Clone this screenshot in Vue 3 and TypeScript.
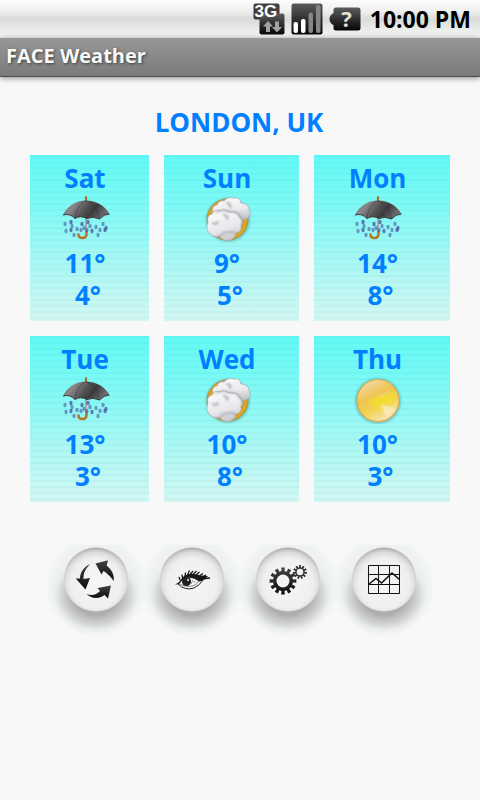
<script setup lang="ts">
interface Forecast {
  day: string
  icon: 'rain' | 'cloud' | 'sun'
  condition: string
  high: number
  low: number
}

interface Action {
  icon: string
  label: string
}

const city = 'LONDON, UK'

const forecasts: Forecast[] = [
  { day: 'Sat', icon: 'rain', condition: 'Rain', high: 11, low: 4 },
  { day: 'Sun', icon: 'cloud', condition: 'Cloudy', high: 9, low: 5 },
  { day: 'Mon', icon: 'rain', condition: 'Rain', high: 14, low: 8 },
  { day: 'Tue', icon: 'rain', condition: 'Rain', high: 13, low: 3 },
  { day: 'Wed', icon: 'cloud', condition: 'Cloudy', high: 10, low: 8 },
  { day: 'Thu', icon: 'sun', condition: 'Sunny', high: 10, low: 3 },
]

const actions: Action[] = [
  { icon: 'refresh', label: 'Refresh' },
  { icon: 'eye', label: 'View' },
  { icon: 'gears', label: 'Settings' },
  { icon: 'chart', label: 'Chart' },
]

const drops: number[][] = [
  [3, 29], [9, 27], [10, 31], [4, 36], [9, 35], [15, 34], [12, 40], [20, 29], [22, 33],
  [19, 35], [26, 27], [28, 31], [25, 35], [30, 36], [34, 32], [41, 29], [44, 33],
  [38, 35], [36, 40], [43, 35],
]

// Closed outline of a gear with square teeth around (cx, cy).
function gear(cx: number, cy: number, inner: number, outer: number, teeth: number): string {
  const step = (Math.PI * 2) / teeth
  const points: string[] = []
  for (let i = 0; i < teeth; i++) {
    const a = i * step - Math.PI / 2
    const corners: [number, number][] = [
      [inner, -0.28], [outer, -0.25], [outer, 0.25], [inner, 0.28],
    ]
    for (const [r, k] of corners) {
      points.push(`${(cx + r * Math.cos(a + k * step)).toFixed(2)} ${(cy + r * Math.sin(a + k * step)).toFixed(2)}`)
    }
  }
  return `M${points.join('L')}Z`
}

const bigGear = gear(43, 36, 10, 13.5, 12)
const smallGear = gear(60, 27, 4.8, 7, 11)
</script>

<template>
  <div class="screen">
    <svg class="defs" width="0" height="0" aria-hidden="true">
      <defs>
        <linearGradient id="plate" x1="0" y1="0" x2="0" y2="1">
          <stop offset="0" stop-color="#5c5c5c" />
          <stop offset="0.5" stop-color="#303030" />
          <stop offset="1" stop-color="#050505" />
        </linearGradient>
        <linearGradient id="umbrella" x1="0" y1="0" x2="1" y2="0.3">
          <stop offset="0" stop-color="#5a585a" />
          <stop offset="0.28" stop-color="#8b898b" />
          <stop offset="0.55" stop-color="#555355" />
          <stop offset="0.75" stop-color="#3c3a3c" />
          <stop offset="1" stop-color="#6a686a" />
        </linearGradient>
        <linearGradient id="puff" x1="0.3" y1="0" x2="0.6" y2="1">
          <stop offset="0" stop-color="#fbfbfc" />
          <stop offset="0.6" stop-color="#e9e9ec" />
          <stop offset="1" stop-color="#c2c4c9" />
        </linearGradient>
        <linearGradient id="sunbody" x1="0.2" y1="0" x2="0.7" y2="1">
          <stop offset="0" stop-color="#f4dcae" />
          <stop offset="0.4" stop-color="#efc350" />
          <stop offset="0.65" stop-color="#f2d450" />
          <stop offset="1" stop-color="#f6e3c0" />
        </linearGradient>
        <radialGradient id="halo">
          <stop offset="0" stop-color="#e9ebe9" />
          <stop offset="0.8" stop-color="#eef1ee" />
          <stop offset="1" stop-color="#f3f7f3" />
        </radialGradient>
        <radialGradient id="drop">
          <stop offset="0" stop-color="#9c9e9c" />
          <stop offset="0.5" stop-color="#aeb0ae" />
          <stop offset="0.75" stop-color="#cfd1cf" stop-opacity="0.85" />
          <stop offset="1" stop-color="#f0f2f0" stop-opacity="0" />
        </radialGradient>
        <radialGradient id="knob" cx="0.5" cy="0.56" r="0.56">
          <stop offset="0" stop-color="#f6f7f6" />
          <stop offset="0.7" stop-color="#eeefee" />
          <stop offset="0.86" stop-color="#dcdddc" />
          <stop offset="1" stop-color="#acaeac" />
        </radialGradient>
        <linearGradient id="ink" x1="0" y1="0" x2="0" y2="1">
          <stop offset="0" stop-color="#424242" />
          <stop offset="1" stop-color="#0c0c0c" />
        </linearGradient>
        <filter id="soft" x="-40%" y="-40%" width="180%" height="180%">
          <feGaussianBlur stdDeviation="1.2" />
        </filter>

        <symbol id="wx-rain" viewBox="0 0 48 48">
          <path d="M24 2V8" stroke="#a8752f" stroke-width="2.2" stroke-linecap="round" />
          <path d="M24 22V37" stroke="#a9a7a0" stroke-width="2" />
          <path d="M24.500 36V38.500Q24.500 43 20.500 43Q16.500 43 16.500 39.500" fill="none" stroke="#b6762a" stroke-width="2.600" stroke-linecap="round" />
          <g fill="#5060a4">
            <ellipse v-for="([x, y], i) in drops" :key="i" :cx="x" :cy="y" rx="1.600" ry="2.200" :opacity="i % 3 === 1 ? 0.85 : 0.65" />
          </g>
          <path d="M1 20Q8 6 24 5.500Q40 6 47.500 19Q42 19 37.500 24Q31 21 25 23.500Q18 20 13 23.500Q8 18 1 20Z" fill="url(#umbrella)" />
          <path d="M1 20Q8 18 13 23.500Q18 20 25 23.500Q31 21 37.500 24Q42 19 47.500 19" fill="none" stroke="#3b393b" stroke-width="1" />
          <path d="M24 5.500Q14 11 13 23M24 5.500Q35 10 37.500 24" fill="none" stroke="#2b292b" stroke-width="0.900" opacity="0.450" />
        </symbol>

        <symbol id="wx-cloud" viewBox="0 0 48 48">
          <circle cx="24" cy="25" r="22" fill="#4d8f8b" opacity="0.450" filter="url(#soft)" />
          <circle cx="23.500" cy="24.500" r="20.500" fill="#dba520" stroke="#a98534" stroke-width="0.800" />
          <g stroke="#a6a9ae" stroke-width="0.700" fill="url(#puff)">
            <path d="M9 17Q7 11 13 10Q15 5 20 6Q24 1 30 3Q36 2 37 8Q44 8 45 14Q48 20 44 23Q40 26 34 24Q27 26 22 20Q14 22 9 17Z" />
            <path d="M4 27Q2 21 8 19Q10 14 16 16Q20 13 25 17Q33 16 35 21Q41 26 37 31Q38 37 32 38Q31 44 24 46Q17 45 16 41Q10 43 6 39Q1 34 4 27Z" />
          </g>
          <path d="M11 18Q17 14 25 16.500Q34 16 36 22Q40 26 37 31" fill="none" stroke="#84878e" stroke-width="1.500" opacity="0.600" filter="url(#soft)" />
          <path d="M16 40.500Q22 35 32 38" fill="none" stroke="#84878e" stroke-width="1.500" opacity="0.600" filter="url(#soft)" />
          <g fill="none" stroke="#8a8d95" stroke-width="2" stroke-linecap="round" filter="url(#soft)" opacity="0.700">
            <path d="M23 8Q28 9 26 12M9 28Q12 30 14 27M20 20Q25 21 23 24" />
          </g>
        </symbol>

        <symbol id="wx-sun" viewBox="0 0 48 48">
          <circle cx="24" cy="25" r="23" fill="#4d8f8b" opacity="0.450" filter="url(#soft)" />
          <circle cx="24" cy="24.500" r="21" fill="url(#sunbody)" stroke="#dcaa50" stroke-width="1.200" />
          <g filter="url(#soft)">
            <path d="M41 16L19 22L14 27L21 29L27 38L27 30L38 27Z" fill="#f4df26" opacity="0.750" />
            <path d="M38 13L22 20L30 21Z" fill="#f7d987" opacity="0.500" />
            <path d="M27 29L41 32Q38 38 32 41Z" fill="#faf0cc" opacity="0.700" />
          </g>
        </symbol>

        <symbol id="act-refresh" viewBox="0 0 96 96">
          <g fill="url(#ink)">
            <path d="M42 19C36 26 35.500 29 35.500 34L42 33L37.500 44.500L27.700 33.500L32 33.500C32 27 36 22 42 19Z" />
            <path d="M47.500 18.500L60 15.300L58.700 20.500C64 25 66.500 30 65.700 36C62 31 59 28 55.500 26L53.500 29.500Z" />
            <path d="M38.500 49C44 51 48 50 52 46L49.500 43L63 40.500L60 53.500L56.500 50C51 54 44 54 38.500 49Z" />
          </g>
        </symbol>

        <symbol id="act-eye" viewBox="0 0 96 96">
          <path d="M31 39.500Q35 38 38 33Q43 28 50 29Q57 31 64 31Q60 36 55 36.500Q51 33 44 32.500Q38 34 36 38Q34 40 31 39.500Z" fill="#181818" />
          <path d="M34 39Q41 46 50 43Q56 40 59 35" fill="none" stroke="#202020" stroke-width="1" />
          <path d="M35 38.500Q42 43 50 40.500Q53 39 55 36" fill="none" stroke="#555" stroke-width="0.700" />
          <circle cx="42.500" cy="36.500" r="4.600" fill="#222" />
          <circle cx="44" cy="35" r="1.100" fill="#f4f4f4" />
          <path d="M49 35L47 39M51 36L50 38" stroke="#777" stroke-width="0.800" />
          <path d="M36 35L35 32M38.500 33L38 29.500M41 31.500L41.500 27.500M43.500 30L45.500 25.500M46 29.500L49 26M49 29.500L52.500 26M52 30L55.500 27M55 31L59 28.500M57 32.500L62 30M57 34L66 33" stroke="#181818" stroke-width="1.300" />
        </symbol>

        <symbol id="act-gears" viewBox="0 0 96 96">
          <path :d="bigGear" fill="url(#ink)" />
          <circle cx="43" cy="36" r="6.500" fill="#f3f4f3" />
          <path :d="smallGear" fill="#303030" />
          <circle cx="60" cy="27" r="3.300" fill="#f0f1f0" />
        </symbol>

        <symbol id="act-chart" viewBox="0 0 96 96">
          <path d="M32.500 20.500H63.500V48.500H32.500ZM42.500 20.500V48.500M53.500 20.500V48.500M32.500 29.500H63.500M32.500 39.500H63.500" fill="none" stroke="#111" stroke-width="1" />
          <path d="M32.500 39.500L40 33.500L45.500 38L56 28L63.500 34.500" fill="none" stroke="#111" stroke-width="1.600" />
        </symbol>
      </defs>
    </svg>

    <div class="status">
      <svg width="32" height="32" viewBox="0 0 32 32" role="img" aria-label="3G data">
        <rect x="0.500" y="0.500" width="26" height="16" rx="2" fill="#3f3f3f" />
        <rect x="6.500" y="10.500" width="25" height="21" rx="2" fill="url(#plate)" />
        <text class="network" x="1.500" y="14">3G</text>
        <path d="M15 18L20 23.500H17V29H13V23.500H10Z" fill="#a3a3a3" />
        <path d="M24 29.500L29 24H26V18.500H22V24H19Z" fill="#a3a3a3" />
      </svg>
      <svg width="32" height="32" viewBox="0 0 32 32" role="img" aria-label="Signal: two of four bars">
        <rect x="0.500" y="0.500" width="31" height="31" rx="2" fill="url(#plate)" />
        <rect x="2.500" y="19" width="4.500" height="11" rx="2" fill="#fff" />
        <rect x="10" y="16" width="4.500" height="14" rx="2" fill="#fff" />
        <rect x="17.500" y="9.500" width="4.500" height="20.500" rx="2" fill="#858585" />
        <rect x="25" y="2" width="4.500" height="28" rx="2" fill="#858585" />
      </svg>
      <svg width="32" height="32" viewBox="0 0 32 32" role="img" aria-label="Battery: unknown">
        <path d="M7 4.500H29Q31.500 4.500 31.500 7V25Q31.500 27.500 29 27.500H7Q4.500 27.500 4.500 25V22Q0.500 20 0.500 16Q0.500 12 4.500 10V7Q4.500 4.500 7 4.500Z" fill="url(#plate)" />
        <text class="unknown" x="17.500" y="24" text-anchor="middle">?</text>
      </svg>
      <time class="clock">10:00 PM</time>
    </div>

    <header class="titlebar">FACE Weather</header>

    <main class="content">
      <h1 class="city">{{ city }}</h1>

      <section class="forecast">
        <article v-for="f in forecasts" :key="f.day" class="card">
          <h2 class="day">{{ f.day }}</h2>
          <svg class="weather" width="48" height="48" role="img" :aria-label="f.condition">
            <use :href="`#wx-${f.icon}`" />
          </svg>
          <p class="high">{{ f.high }}°</p>
          <p class="low">{{ f.low }}°</p>
        </article>
      </section>

      <nav class="actions">
        <button v-for="a in actions" :key="a.icon" type="button" class="action" :aria-label="a.label">
          <svg width="96" height="96" viewBox="0 0 96 96" aria-hidden="true">
            <circle cx="48" cy="41" r="50" fill="url(#halo)" />
            <ellipse cx="48" cy="50" rx="46" ry="40" fill="url(#drop)" />
            <circle cx="48" cy="34.500" r="32" fill="url(#knob)" />
            <use :href="`#act-${a.icon}`" width="96" height="96" />
          </svg>
        </button>
      </nav>
    </main>
  </div>
</template>

<style>
body {
  margin: 0;
  background: #f8f8f8;
}
</style>

<style scoped>
.screen {
  min-height: 100vh;
  background: #f8f8f8;
  font-family: "Open Sans", "Noto Sans", sans-serif;
  font-weight: 700;
}

.defs {
  position: absolute;
}

.status {
  display: flex;
  align-items: center;
  justify-content: flex-end;
  gap: 6px;
  box-sizing: border-box;
  height: 38px;
  padding-right: 9px;
  background: linear-gradient(#fbfcfb 0%, #eeefee 30%, #d9dbd9 50%, #e6e8e6 70%, #f6f8f6 100%);
}

.network {
  font: 700 17px "Liberation Sans", sans-serif;
  fill: #fff;
}

.unknown {
  font: 700 22px "Open Sans", sans-serif;
  fill: #e4e0d4;
}

.clock {
  padding-left: 3px;
  font-size: 23px;
  line-height: 32px;
  color: #000;
}

.titlebar {
  box-sizing: border-box;
  height: 39px;
  padding: 0 6px;
  border-bottom: 1px solid #4c4c4c;
  background: linear-gradient(#969796, #7a7b7a);
  box-shadow: 0 1px 6px rgba(0, 0, 0, 0.45);
  color: #f8faf8;
  font-size: 20px;
  line-height: 36px;
  text-shadow: 1px 1px 3px #3c3c3c;
}

.content {
  padding: 29px 30px 0;
}

.city {
  margin: 0 0 17px;
  padding-right: 2px;
  color: #0080ff;
  font-size: 26px;
  line-height: 32px;
  text-align: center;
}

.forecast {
  display: grid;
  grid-template-columns: 119fr 135fr 136fr;
  gap: 15px;
}

.card {
  display: flex;
  flex-direction: column;
  align-items: center;
  padding: 7px 0 10px;
  background:
    repeating-linear-gradient(rgba(0, 110, 130, 0.04) 0 2px, transparent 2px 6px),
    linear-gradient(#62f9f5, #84f9f5 35%, #a6f8f4 62%, #d3f7f3);
  color: #0080ff;
  font-size: 26px;
  line-height: 32px;
}

.day,
.high,
.low {
  margin: 0;
  font-size: inherit;
}

.day,
.high {
  padding-right: 9px;
}

.low {
  padding-right: 3px;
}

.weather {
  margin: 1px 8px 4px 0;
}

.actions {
  display: flex;
  justify-content: center;
  margin-top: 43px;
}

.action {
  padding: 0;
  border: 0;
  background: none;
  cursor: pointer;
}

.action svg {
  display: block;
}
</style>
